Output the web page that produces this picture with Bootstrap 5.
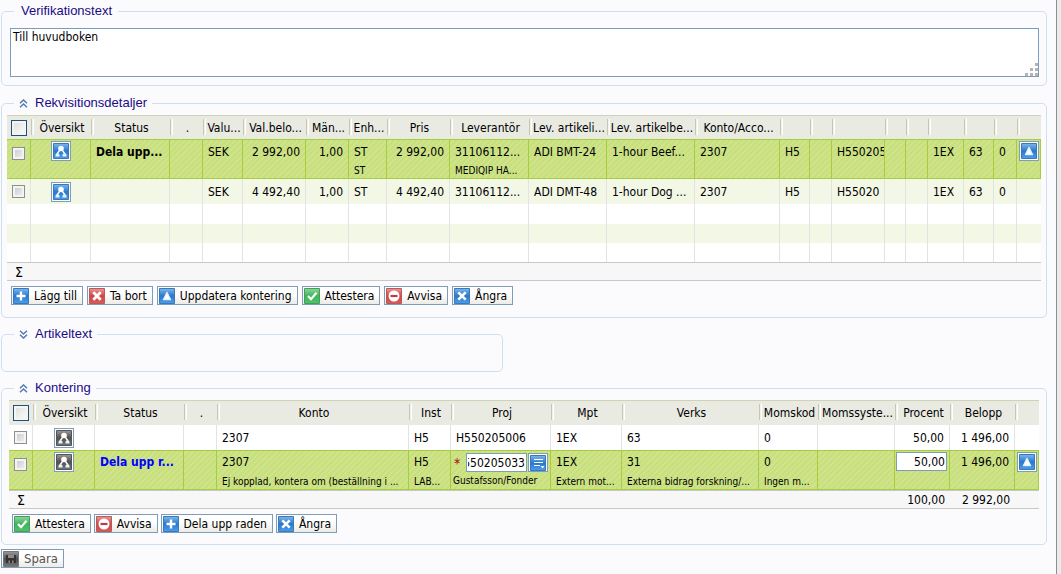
<!DOCTYPE html>
<html lang="sv">
<head>
<meta charset="utf-8">
<meta name="viewport" content="width=device-width, initial-scale=1">
<title>Kontering</title>
<link href="https://cdn.jsdelivr.net/npm/bootstrap@5.3.0/dist/css/bootstrap.min.css" rel="stylesheet">
<style>
body{background:#ebebeb;color:#000;font-family:"DejaVu Sans Condensed","DejaVu Sans",sans-serif;font-stretch:condensed;font-size:12px;line-height:16px}
.page{background:#fbfbfe;border-right:1px solid #8b9096;margin-right:4px;padding:3px 9px 4px 1px}
.group{border:1px solid #cfdef0;border-radius:5px;margin-bottom:8px}
.group>legend{float:none;width:auto;margin:0 0 0 7px;padding:0 5px;font:13px/16px "Liberation Sans",Arial,sans-serif;color:#1a0a86;display:flex;align-items:center}
.group>legend svg{width:9px;height:9px;margin-right:7px}
.group-text{padding:9px 7px 8px 8px;margin-bottom:9px}
.group-text>legend{margin-left:4px;padding:0 6px 0 7px}
.group-req{padding:4px 5px 12px}
.group-acc{padding:4px 7px 11px;margin-bottom:4px}
.group-acc>legend{margin-left:5px}
.group-art{width:48%;padding:0 5px 29px}
.note{display:block;width:100%;height:49px;border:1px solid #7a9cbf;background:#fff;padding:0 2px;resize:none;font:inherit;color:#000;outline:0}
.grip{right:1px;bottom:1px;width:13px;height:13px}
.grid{width:100%;table-layout:fixed;border-collapse:separate;border-spacing:0}
.grid th,.grid td{padding:0 5px;overflow:hidden;white-space:nowrap;vertical-align:middle}
.grid thead th{height:24px;font-weight:400;text-align:center;padding:0 0 0 2px;border-top:1px solid #d0d2b6;
 background:#e9eae2 linear-gradient(90deg,#c6c6b2 0 1px,#f1f1ea 1px 2px,#fff 2px 3px) no-repeat 0 3px/3px 16px}
.grid thead th:first-child{background-image:none;padding:0}
.grid tbody td{height:25px;border-right:1px solid #e3e3e3;background:#fff}
.grid tbody td:last-child{border-right-color:transparent}
.grid tbody tr.alt td{background:#f3f7e6}
.grid tbody tr.gap td{height:19px}
.grid tbody tr.gap:not(.alt) td{height:20px}
.grid tbody tr.gap:last-child td{height:19px}
.grid tbody tr.picked td{height:40px;vertical-align:top;padding-top:4px;border:solid #a6cd3c;border-width:1px 1px 1px 0;
 background:repeating-linear-gradient(135deg,#c8df7d 0 2px,#cee38a 2px 4px)}
.grid td.num{text-align:right}
.grid .mid{text-align:center;padding-left:0!important;padding-right:0!important}
.grid tbody tr.picked td.mid{padding-top:1px}
.grid tbody tr.picked td.tick{padding-top:7px}
.grid tfoot td{height:19px;line-height:16px;background:#f7f7f7;border-top:1px solid #c8c8c8;border-bottom:1px solid #c8c8c8}
.grid tfoot td.mid{font-size:14px}
.sub{display:block;font-size:10px;line-height:12px;margin-top:5px}
.acc tbody tr.picked td{padding-top:3px}
.acc .sub{margin-top:6px}
.acc thead th{height:25px}
.box{appearance:none;display:block;margin:0 auto;width:13px;height:13px;border:1px solid #8f8f8f;background:linear-gradient(135deg,#c8c8ce,#f2f2f2);box-shadow:inset 0 0 0 2px #f4f4f4}
.box-all{width:16px;height:16px;border-color:#1c5180;background:linear-gradient(135deg,#dcdcd7,#fff)}
.ibtn{display:block;margin:0 auto;width:20px;height:20px;padding:1px;border:1px solid #7f9db9;background:#fff}
.ibtn svg,.cmd svg{display:block;width:16px;height:16px;flex:none}
.cmd{display:flex;align-items:center;gap:5px;height:19px;padding:0 5px 0 1px;border:1px solid #7f9db9;border-radius:0;background:linear-gradient(#fff,#fff 40%,#ecebe6);color:#000;font:inherit;line-height:16px;white-space:nowrap}
.cmd:disabled{color:#555;font-size:13px}
.bar{gap:4px;margin:5px 0 0 4px}
.group-acc .bar{gap:3px;margin-left:3px}
.fld{border:1px solid #7f9db9;background:#fff;height:19px;padding:0 1px;font:inherit;color:#000;outline:0;min-width:0}
.proj{gap:1px;height:19px;margin:-1px -3px 0 -2px}
.proj .fld{flex:1;direction:rtl}
.proj .ibtn{flex:none;height:19px;margin:0}
.proj b{color:#b00000;font-size:14px;font-weight:400;width:11px}
.proj+.sub{margin:3px 0 0 -3px}
.acc tbody tr.picked td.pct{padding:1px 2px 0 1px}
.pct .fld{display:block;width:100%;text-align:right}
.todo{color:#00f}
</style>
</head>
<body>
<svg width="0" height="0" class="position-absolute" aria-hidden="true">
 <defs>
  <linearGradient id="gb" x2="0" y2="1"><stop stop-color="#7db8ee"/><stop offset=".5" stop-color="#2a78cc"/><stop offset="1" stop-color="#4b9fee"/></linearGradient>
  <linearGradient id="gr" x2="0" y2="1"><stop stop-color="#e99a98"/><stop offset=".5" stop-color="#cf4545"/><stop offset="1" stop-color="#dc5a58"/></linearGradient>
  <linearGradient id="gg" x2="0" y2="1"><stop stop-color="#8bd89a"/><stop offset=".5" stop-color="#3fb45c"/><stop offset="1" stop-color="#4cc56b"/></linearGradient>
  <linearGradient id="gk" x2="0" y2="1"><stop stop-color="#9a9a9a"/><stop offset=".5" stop-color="#4f4f4f"/><stop offset="1" stop-color="#777"/></linearGradient>
 </defs>
 <symbol id="people" viewBox="0 0 16 16"><circle cx="8" cy="5.500" r="2.800" fill="#fff"/><path d="M6.500 7.500L4 11M9.500 7.500L12 11" stroke="#fff" stroke-width="1.400"/><path d="M2.500 13.500v-2l1-1h2l1 1v2zM9.500 13.500v-2l1-1h2l1 1v2z" fill="#e9f1fa"/></symbol>
 <symbol id="net-b" viewBox="0 0 16 16"><path fill="url(#gb)" stroke="#3b78b8" d="M.5.5h15v15H.5z"/><use href="#people"/></symbol>
 <symbol id="net-k" viewBox="0 0 16 16"><path fill="url(#gk)" stroke="#555" d="M.5.5h15v15H.5z"/><use href="#people"/></symbol>
 <symbol id="up" viewBox="0 0 16 16"><path fill="url(#gb)" stroke="#3b78b8" d="M.5.5h15v15H.5z"/><path d="M8 4.500l3.500 7h-7z" fill="#fff" stroke="#e8f1fa" stroke-width="1.400" stroke-linejoin="round"/></symbol>
 <symbol id="plus" viewBox="0 0 16 16"><path fill="url(#gb)" stroke="#3b78b8" d="M.5.5h15v15H.5z"/><path d="M8 3.500v9M3.500 8h9" stroke="#fff" stroke-width="2.400"/></symbol>
 <symbol id="undo" viewBox="0 0 16 16"><path fill="url(#gb)" stroke="#3b78b8" d="M.5.5h15v15H.5z"/><path d="M4.300 4.300l7.400 7.400M11.700 4.300l-7.400 7.400" stroke="#fff" stroke-width="2.600"/></symbol>
 <symbol id="del" viewBox="0 0 16 16"><path fill="url(#gr)" stroke="#b85a5a" d="M.5.5h15v15H.5z"/><path d="M4.300 4.300l7.400 7.400M11.700 4.300l-7.400 7.400" stroke="#fff" stroke-width="2.800"/></symbol>
 <symbol id="deny" viewBox="0 0 16 16"><path fill="url(#gr)" stroke="#b85a5a" d="M.5.5h15v15H.5z"/><circle cx="8" cy="8" r="5.500" fill="#fff"/><path d="M4.500 8h7" stroke="#b84040" stroke-width="2.200"/></symbol>
 <symbol id="ok" viewBox="0 0 16 16"><path fill="url(#gg)" stroke="#4a9a5c" d="M.5.5h15v15H.5z"/><path d="M4 8l3 3.200 5.500-6.400" fill="none" stroke="#fff" stroke-width="2.200"/></symbol>
 <symbol id="list" viewBox="0 0 16 16"><path fill="url(#gb)" stroke="#3b78b8" d="M.5.5h15v15H.5z"/><path d="M4 4.500h9M4 7.500h9M4 10.500h6" stroke="#fff" stroke-width="1.200"/><path d="M10.500 11h4l-2 2.500z" fill="#fff"/></symbol>
 <symbol id="disk" viewBox="0 0 16 16"><path fill="url(#gk)" stroke="#777" d="M.5.5h15v15H.5z"/><path d="M3 4h10v8H3z" fill="#333"/><path d="M5 4h6v3H5zM5.500 9.500h1.500V12H5.500zM9 9.500h1.500V12H9z" fill="#8c8c8c"/></symbol>
 <symbol id="fold" viewBox="0 0 9 9"><path d="M1 4.200L4.500 1 8 4.200M1 8.200L4.500 5 8 8.200" fill="none" stroke="#4f7cb4" stroke-width="1.500"/></symbol>
 <symbol id="unfold" viewBox="0 0 9 9"><path d="M1 .8L4.500 4 8 .8M1 4.800L4.500 8 8 4.800" fill="none" stroke="#4f7cb4" stroke-width="1.500"/></symbol>
</svg>

<main class="page min-vh-100">
 <fieldset class="group group-text">
  <legend><label for="vtext">Verifikationstext</label></legend>
  <div class="position-relative">
   <textarea id="vtext" class="note">Till huvudboken</textarea>
   <svg class="grip position-absolute" viewBox="0 0 13 13" aria-hidden="true"><path fill="#b4b4b4" d="M10 0h3v3h-3zM10 5h3v3h-3zM5 5h3v3H5zM10 10h3v3h-3zM5 10h3v3H5zM0 10h3v3H0z"/></svg>
  </div>
 </fieldset>

 <fieldset class="group group-req">
  <legend><svg aria-hidden="true"><use href="#fold"/></svg>Rekvisitionsdetaljer</legend>
  <table class="grid">
   <colgroup><col width="24"><col width="60"><col width="79"><col width="33"><col width="40"><col width="63"><col width="43"><col width="38"><col width="63"><col width="79"><col width="78"><col width="88"><col width="85"><col width="30"><col width="22"><col width="53"><col width="21"><col width="22"><col width="36"><col width="30"><col width="23"><col width="24"></colgroup>
   <thead><tr>
    <th><input type="checkbox" class="box box-all" aria-label="Markera alla"></th><th>Översikt</th><th>Status</th><th>.</th><th>Valu...</th><th>Val.belo...</th><th>Män...</th><th>Enh...</th><th>Pris</th><th>Leverantör</th><th>Lev. artikeli...</th><th>Lev. artikelbe...</th><th>Konto/Acco...</th><th></th><th></th><th></th><th></th><th></th><th></th><th></th><th></th><th></th>
   </tr></thead>
   <tbody>
    <tr class="picked">
     <td class="mid tick"><input type="checkbox" class="box" aria-label="Markera rad 1"></td>
     <td class="mid"><button type="button" class="ibtn" aria-label="Översikt"><svg><use href="#net-b"/></svg></button></td>
     <td class="fw-bold">Dela upp...</td><td></td><td>SEK</td><td class="num">2 992,00</td><td class="num">1,00</td>
     <td>ST<span class="sub">ST</span></td><td class="num">2 992,00</td><td>31106112...<span class="sub">MEDIQIP HA...</span></td>
     <td>ADI BMT-24</td><td>1-hour Beef...</td><td>2307</td><td>H5</td><td></td><td class="pe-0">H550205</td><td></td><td></td><td>1EX</td><td>63</td><td>0</td>
     <td class="mid"><button type="button" class="ibtn" aria-label="Uppdatera"><svg><use href="#up"/></svg></button></td>
    </tr>
    <tr class="alt">
     <td class="mid"><input type="checkbox" class="box" aria-label="Markera rad 2"></td>
     <td class="mid"><button type="button" class="ibtn" aria-label="Översikt"><svg><use href="#net-b"/></svg></button></td>
     <td></td><td></td><td>SEK</td><td class="num">4 492,40</td><td class="num">1,00</td><td>ST</td><td class="num">4 492,40</td><td>31106112...</td>
     <td>ADI DMT-48</td><td>1-hour Dog ...</td><td>2307</td><td>H5</td><td></td><td class="pe-0">H55020</td><td></td><td></td><td>1EX</td><td>63</td><td>0</td><td></td>
    </tr>
    <tr class="gap"><td></td><td></td><td></td><td></td><td></td><td></td><td></td><td></td><td></td><td></td><td></td><td></td><td></td><td></td><td></td><td></td><td></td><td></td><td></td><td></td><td></td><td></td></tr>
    <tr class="gap alt"><td></td><td></td><td></td><td></td><td></td><td></td><td></td><td></td><td></td><td></td><td></td><td></td><td></td><td></td><td></td><td></td><td></td><td></td><td></td><td></td><td></td><td></td></tr>
    <tr class="gap"><td></td><td></td><td></td><td></td><td></td><td></td><td></td><td></td><td></td><td></td><td></td><td></td><td></td><td></td><td></td><td></td><td></td><td></td><td></td><td></td><td></td><td></td></tr>
   </tbody>
   <tfoot><tr><td class="mid">Σ</td><td colspan="21"></td></tr></tfoot>
  </table>
  <div class="bar d-flex flex-wrap">
   <button type="button" class="cmd"><svg><use href="#plus"/></svg>Lägg till</button>
   <button type="button" class="cmd"><svg><use href="#del"/></svg>Ta bort</button>
   <button type="button" class="cmd"><svg><use href="#up"/></svg>Uppdatera kontering</button>
   <button type="button" class="cmd"><svg><use href="#ok"/></svg>Attestera</button>
   <button type="button" class="cmd"><svg><use href="#deny"/></svg>Avvisa</button>
   <button type="button" class="cmd"><svg><use href="#undo"/></svg>Ångra</button>
  </div>
 </fieldset>

 <fieldset class="group group-art">
  <legend><svg aria-hidden="true"><use href="#unfold"/></svg>Artikeltext</legend>
 </fieldset>

 <fieldset class="group group-acc">
  <legend><svg aria-hidden="true"><use href="#fold"/></svg>Kontering</legend>
  <table class="grid acc">
   <colgroup><col width="24"><col width="62"><col width="89"><col width="33"><col width="192"><col width="42"><col width="100"><col width="71"><col width="137"><col width="59"><col width="77"><col width="55"><col width="65"><col width="24"></colgroup>
   <thead><tr>
    <th><input type="checkbox" class="box box-all" aria-label="Markera alla"></th><th>Översikt</th><th>Status</th><th>.</th><th>Konto</th><th>Inst</th><th>Proj</th><th>Mpt</th><th>Verks</th><th>Momskod</th><th>Momssyste...</th><th>Procent</th><th>Belopp</th><th></th>
   </tr></thead>
   <tbody>
    <tr>
     <td class="mid"><input type="checkbox" class="box" aria-label="Markera rad 1"></td>
     <td class="mid"><button type="button" class="ibtn" aria-label="Översikt"><svg><use href="#net-k"/></svg></button></td>
     <td></td><td></td><td>2307</td><td>H5</td><td>H550205006</td><td>1EX</td><td>63</td><td>0</td><td></td><td class="num">50,00</td><td class="num">1 496,00</td><td></td>
    </tr>
    <tr class="picked">
     <td class="mid tick"><input type="checkbox" class="box" aria-label="Markera rad 2"></td>
     <td class="mid"><button type="button" class="ibtn" aria-label="Översikt"><svg><use href="#net-k"/></svg></button></td>
     <td class="fw-bold todo">Dela upp r...</td><td></td>
     <td>2307<span class="sub">Ej kopplad, kontera om (beställning i ...</span></td>
     <td>H5<span class="sub">LAB...</span></td>
     <td><div class="proj d-flex align-items-center"><b>*</b><input type="text" class="fld" value="H550205033" aria-label="Proj"><button type="button" class="ibtn" aria-label="Välj projekt"><svg><use href="#list"/></svg></button></div><span class="sub">Gustafsson/Fonder</span></td>
     <td>1EX<span class="sub">Extern mot...</span></td>
     <td>31<span class="sub">Externa bidrag forskning/...</span></td>
     <td>0<span class="sub">Ingen m...</span></td><td></td>
     <td class="pct"><input type="text" class="fld" value="50,00" aria-label="Procent"></td>
     <td class="num">1 496,00</td>
     <td class="mid"><button type="button" class="ibtn" aria-label="Uppdatera"><svg><use href="#up"/></svg></button></td>
    </tr>
   </tbody>
   <tfoot><tr><td class="mid">Σ</td><td colspan="10"></td><td class="num">100,00</td><td class="num">2 992,00</td><td></td></tr></tfoot>
  </table>
  <div class="bar d-flex flex-wrap">
   <button type="button" class="cmd"><svg><use href="#ok"/></svg>Attestera</button>
   <button type="button" class="cmd"><svg><use href="#deny"/></svg>Avvisa</button>
   <button type="button" class="cmd"><svg><use href="#plus"/></svg>Dela upp raden</button>
   <button type="button" class="cmd"><svg><use href="#undo"/></svg>Ångra</button>
  </div>
 </fieldset>
 <button type="button" class="cmd" disabled><svg><use href="#disk"/></svg>Spara</button>
</main>
<script src="https://cdn.jsdelivr.net/npm/bootstrap@5.3.0/dist/js/bootstrap.bundle.min.js"></script>
</body>
</html>
